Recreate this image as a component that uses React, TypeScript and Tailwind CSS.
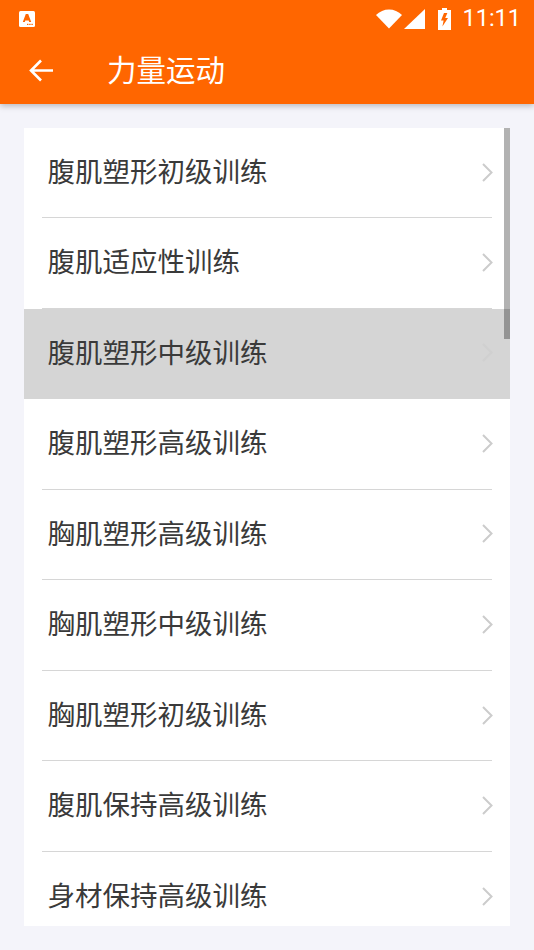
const items = [
  '腹肌塑形初级训练',
  '腹肌适应性训练',
  '腹肌塑形中级训练',
  '腹肌塑形高级训练',
  '胸肌塑形高级训练',
  '胸肌塑形中级训练',
  '胸肌塑形初级训练',
  '腹肌保持高级训练',
  '身材保持高级训练',
];

function StatusBar() {
  return (
    <div className="flex h-[37px] items-center pl-[19px] pr-[13px]">
      <svg width="16" height="16" viewBox="0 0 16 16">
        <rect x="0" y="0" width="16" height="16" rx="1.5" fill="#fff" />
        <path d="M3.8 11 L6.8 3 H9.2 L12.2 11 H10.2 L9.7 9.4 H6.3 L5.8 11 Z" fill="#ff6600" />
        <rect x="8" y="12.8" width="1.4" height="1.2" fill="#ff6600" />
        <rect x="10.2" y="12.8" width="1.4" height="1.2" fill="#ff6600" />
        <rect x="12.4" y="12.8" width="1.4" height="1.2" fill="#ff6600" />
      </svg>
      <div className="ml-auto flex items-center">
        <svg width="26" height="20" viewBox="0 0 26 20">
          <path d="M0 6 C7 -1.5 19 -1.5 26 6 L13 19.5 Z" fill="#fff" />
        </svg>
        <svg className="ml-[2px]" width="21" height="20" viewBox="0 0 21 20">
          <path d="M21 0 V20 H0 Z" fill="#fff" />
        </svg>
        <svg className="ml-[13px]" width="13" height="22" viewBox="0 0 13 22">
          <path
            fillRule="evenodd"
            d="M4 0 H9 V2 H13 V22 H0 V2 H4 Z M6 5 L3 12.5 H5.6 L4.4 18.5 L10 10 H7.2 L9.4 5 Z"
            fill="#fff"
          />
        </svg>
        <span className="ml-[11px] text-[23.5px] leading-none text-white font-['Roboto',sans-serif]">
          11:11
        </span>
      </div>
    </div>
  );
}

function Row({ label, active, first, last }: { label: string; active: boolean; first: boolean; last: boolean }) {
  return (
    <div
      className={`relative flex shrink-0 items-center pl-[23.5px] pr-[17px] ${first ? 'h-[90px]' : 'h-[90.57px]'} ${active ? 'bg-[#d5d5d5]' : ''}`}
    >
      <span className="flex-1 pb-[5px] text-[27.5px] leading-none text-[#3a3a3a]">{label}</span>
      <svg width="11" height="19" viewBox="0 0 11 19" fill="none" className={`mb-[2px] ${active ? 'opacity-50' : ''}`}>
        <path d="M1 1 L9.5 9.5 L1 18" stroke="#cccccc" strokeWidth="2" />
      </svg>
      {!last && !active && <div className="absolute bottom-0 left-[18px] right-[18px] h-[1px] bg-[#d6d6d6]" />}
    </div>
  );
}

export default function App() {
  return (
    <div className="flex h-[950px] w-[534px] flex-col overflow-hidden bg-[#f4f4fa] font-['Noto_Sans_CJK_SC',sans-serif]">
      <header className="z-10 h-[104px] shrink-0 bg-[#ff6600] shadow-[0_2px_6px_rgba(0,0,0,0.25)]">
        <StatusBar />
        <div className="flex h-[66px] items-center pl-[29px]">
          <svg width="25" height="25" viewBox="0 0 25 25" fill="none">
            <path d="M24 12.5 H2 M12 2.5 L2 12.5 L12 22.5" stroke="#fff" strokeWidth="2.6" />
          </svg>
          <span className="ml-[53px] pb-[3px] text-[29.5px] leading-none text-white">力量运动</span>
        </div>
      </header>
      <main className="relative mx-[24px] mt-[24px] flex h-[798px] flex-col overflow-hidden bg-white">
        {items.map((item, i) => (
          <Row key={item} label={item} active={i === 2} first={i === 0} last={i === items.length - 1} />
        ))}
        <div className="absolute right-0 top-0 h-[211px] w-[6px] bg-[rgba(0,0,0,0.3)]" />
      </main>
    </div>
  );
}
